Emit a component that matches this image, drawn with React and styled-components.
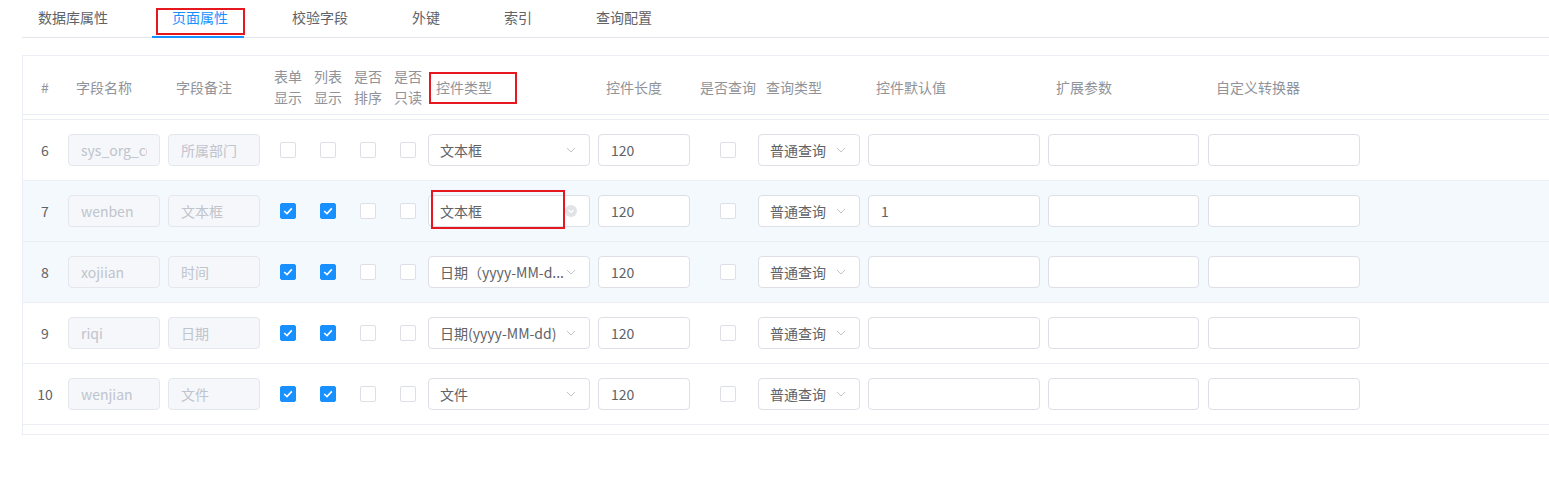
import React from "react";
import styled, { createGlobalStyle } from "styled-components";

const GlobalStyle = createGlobalStyle`
  html, body {
    margin: 0;
    padding: 0;
    background: #fff;
    overflow: hidden;
  }
  body {
    font-family: "Noto Sans CJK SC", "Noto Sans", sans-serif;
    font-size: 14px;
    color: #606266;
  }
  * {
    box-sizing: border-box;
  }
`;

const tabs = ["数据库属性", "页面属性", "校验字段", "外键", "索引", "查询配置"];

const columns = [
  { key: "index", width: 30, gap: 0, align: "center", title: "#" },
  { key: "name", width: 92, gap: 8, title: "字段名称" },
  { key: "remark", width: 92, gap: 8, title: "字段备注" },
  { key: "form", width: 40, gap: 8, align: "center", title: ["表单", "显示"] },
  { key: "list", width: 40, gap: 0, align: "center", title: ["列表", "显示"] },
  { key: "sort", width: 40, gap: 0, align: "center", title: ["是否", "排序"] },
  { key: "readonly", width: 40, gap: 0, align: "center", title: ["是否", "只读"] },
  { key: "type", width: 162, gap: 0, title: "控件类型", marked: true },
  { key: "length", width: 92, gap: 8, title: "控件长度" },
  { key: "query", width: 60, gap: 8, align: "center", title: "是否查询" },
  { key: "queryType", width: 102, gap: 0, title: "查询类型" },
  { key: "default", width: 172, gap: 8, title: "控件默认值" },
  { key: "ext", width: 152, gap: 8, title: "扩展参数" },
  { key: "conv", width: 152, gap: 8, title: "自定义转换器" },
];

// type label is shown as the select displays it (long values come pre-shortened)
const rows = [
  { no: 6, name: "sys_org_code", remark: "所属部门", form: false, list: false, type: "文本框" },
  { no: 7, name: "wenben", remark: "文本框", form: true, list: true, type: "文本框", value: "1", tinted: true, active: true },
  { no: 8, name: "xojiian", remark: "时间", form: true, list: true, type: "日期（yyyy-MM-d...", tinted: true },
  { no: 9, name: "riqi", remark: "日期", form: true, list: true, type: "日期(yyyy-MM-dd)" },
  { no: 10, name: "wenjian", remark: "文件", form: true, list: true, type: "文件" },
];

function Chevron() {
  return (
    <svg width="10" height="6" viewBox="0 0 10 6">
      <polyline points="1,1 5,5 9,1" fill="none" stroke="#c0c4cc" strokeWidth="1" />
    </svg>
  );
}

function ClearIcon() {
  return (
    <svg width="12" height="12" viewBox="0 0 12 12">
      <circle cx="6" cy="6" r="6" fill="#e1e3e7" />
      <polyline points="3.5,5 6,7.5 8.5,5" fill="none" stroke="#fff" strokeWidth="1.2" />
    </svg>
  );
}

function Check({ checked }) {
  return (
    <CheckBox $checked={checked}>
      {checked && (
        <svg width="10" height="8" viewBox="0 0 10 8">
          <polyline points="1.2,4 4,6.6 8.8,1.4" fill="none" stroke="#fff" strokeWidth="1.6" />
        </svg>
      )}
    </CheckBox>
  );
}

function SelectBox({ text, clearable }) {
  return (
    <Select>
      <SelectText>{text}</SelectText>
      <SelectIcon>{clearable ? <ClearIcon /> : <Chevron />}</SelectIcon>
    </Select>
  );
}

function renderCell(key, row) {
  switch (key) {
    case "index":
      return <IndexText>{row.no}</IndexText>;
    case "name":
      return <TextInput $width={92} disabled value={row.name} readOnly />;
    case "remark":
      return <TextInput $width={92} disabled value={row.remark} readOnly />;
    case "form":
      return <Check checked={row.form} />;
    case "list":
      return <Check checked={row.list} />;
    case "sort":
    case "readonly":
    case "query":
      return <Check checked={false} />;
    case "type":
      return (
        <>
          <SelectBox text={row.type} clearable={row.active} />
          {row.active && <Highlight $left={3} $top={9} $width={134} $height={39} />}
        </>
      );
    case "length":
      return <TextInput $width={92} value="120" readOnly />;
    case "queryType":
      return <SelectBox text="普通查询" />;
    case "default":
      return <TextInput $width={172} value={row.value || ""} readOnly />;
    case "ext":
      return <TextInput $width={151} value="" readOnly />;
    case "conv":
      return <TextInput $width={152} value="" readOnly />;
    default:
      return null;
  }
}

export default function App() {
  return (
    <Page>
      <GlobalStyle />
      <TabBar>
        {tabs.map((t, i) => (
          <Tab key={t} $active={i === 1}>
            {t}
            {i === 1 && <Highlight $left={16} $top={8} $width={89} $height={27} />}
          </Tab>
        ))}
      </TabBar>

      <TableBox>
        <HeaderRow>
          {columns.map((c) => (
            <HeaderCell key={c.key} $width={c.width} $gap={c.gap} $align={c.align}>
              {Array.isArray(c.title) ? (
                <TwoLine>
                  <span>{c.title[0]}</span>
                  <span>{c.title[1]}</span>
                </TwoLine>
              ) : (
                c.title
              )}
              {c.marked && <Highlight $left={1} $top={16} $width={88} $height={32} />}
            </HeaderCell>
          ))}
        </HeaderRow>
        <Body>
          {rows.map((r) => (
            <Row key={r.no} $tinted={r.tinted}>
              {columns.map((c) => (
                <BodyCell key={c.key} $width={c.width} $gap={c.gap} $align={c.align}>
                  {renderCell(c.key, r)}
                </BodyCell>
              ))}
            </Row>
          ))}
        </Body>
      </TableBox>
    </Page>
  );
}

const Page = styled.div`
  padding-left: 22px;
  width: 100%;
  overflow: hidden;
`;

const TabBar = styled.div`
  display: flex;
  height: 38px;
  border-bottom: 1px solid #e4e7ed;
  width: calc(100% + 20px);
`;

const Tab = styled.div`
  position: relative;
  height: 37px;
  line-height: 34px;
  padding: 0 32px;
  font-size: 14px;
  color: ${(p) => (p.$active ? "#1890ff" : "#606266")};
  white-space: nowrap;

  &:first-child {
    padding-left: 16px;
  }

  ${(p) =>
    p.$active &&
    `
    &::after {
      content: "";
      position: absolute;
      left: 12px;
      right: 16px;
      bottom: -1px;
      height: 2px;
      background: #1890ff;
    }
  `}
`;

const Highlight = styled.span`
  position: absolute;
  left: ${(p) => p.$left}px;
  top: ${(p) => p.$top}px;
  width: ${(p) => p.$width}px;
  height: ${(p) => p.$height}px;
  border: 2px solid #e5171f;
  pointer-events: none;
`;

const TableBox = styled.div`
  margin-top: 17px;
  width: calc(100% + 20px);
  border: 1px solid #ebeef5;
  padding-bottom: 9px;
`;

const HeaderRow = styled.div`
  display: flex;
  height: 59px;
  padding-left: 7px;
  border-bottom: 1px solid #ebeef5;
`;

const HeaderCell = styled.div`
  position: relative;
  flex: none;
  width: ${(p) => p.$width}px;
  margin-left: ${(p) => p.$gap}px;
  height: 100%;
  display: flex;
  align-items: center;
  justify-content: ${(p) => (p.$align === "center" ? "center" : "flex-start")};
  padding-left: ${(p) => (p.$align === "center" ? 0 : 8)}px;
  padding-top: 3px;
  font-size: 14px;
  color: #909399;
  white-space: nowrap;
`;

const TwoLine = styled.div`
  display: flex;
  flex-direction: column;
  align-items: center;
  line-height: 21px;
`;

const Body = styled.div`
  margin-top: 4px;
  border-top: 1px solid #ebeef5;
`;

const Row = styled.div`
  display: flex;
  height: 61px;
  padding-left: 7px;
  border-bottom: 1px solid #ebeef5;
  background: ${(p) => (p.$tinted ? "#f4f9fe" : "#fff")};
`;

const BodyCell = styled.div`
  position: relative;
  flex: none;
  width: ${(p) => p.$width}px;
  margin-left: ${(p) => p.$gap}px;
  height: 100%;
  display: flex;
  align-items: center;
  justify-content: ${(p) => (p.$align === "center" ? "center" : "flex-start")};
`;

const IndexText = styled.span`
  font-size: 14px;
  color: #606266;
`;

const TextInput = styled.input`
  width: ${(p) => p.$width}px;
  height: 32px;
  padding: 0 12px;
  border: 1px solid #dcdfe6;
  border-radius: 4px;
  background: #fff;
  font-family: inherit;
  font-size: 14px;
  color: #606266;
  outline: none;

  &:disabled {
    background: #f5f7fa;
    border-color: #e4e7ed;
    color: #c0c4cc;
    -webkit-text-fill-color: #c0c4cc;
    opacity: 1;
  }
`;

const Select = styled.div`
  width: 100%;
  height: 32px;
  display: flex;
  align-items: center;
  border: 1px solid #dcdfe6;
  border-radius: 4px;
  background: #fff;
  padding-left: 11px;
`;

const SelectText = styled.span`
  flex: 1;
  min-width: 0;
  white-space: nowrap;
  font-size: 14px;
  color: #606266;
`;

const SelectIcon = styled.span`
  flex: none;
  width: 20px;
  margin-right: 8px;
  display: flex;
  align-items: center;
  justify-content: center;
`;

const CheckBox = styled.span`
  width: 16px;
  height: 16px;
  border-radius: 2px;
  border: 1px solid ${(p) => (p.$checked ? "#1890ff" : "#dcdfe6")};
  background: ${(p) => (p.$checked ? "#1890ff" : "#fff")};
  display: flex;
  align-items: center;
  justify-content: center;
`;
